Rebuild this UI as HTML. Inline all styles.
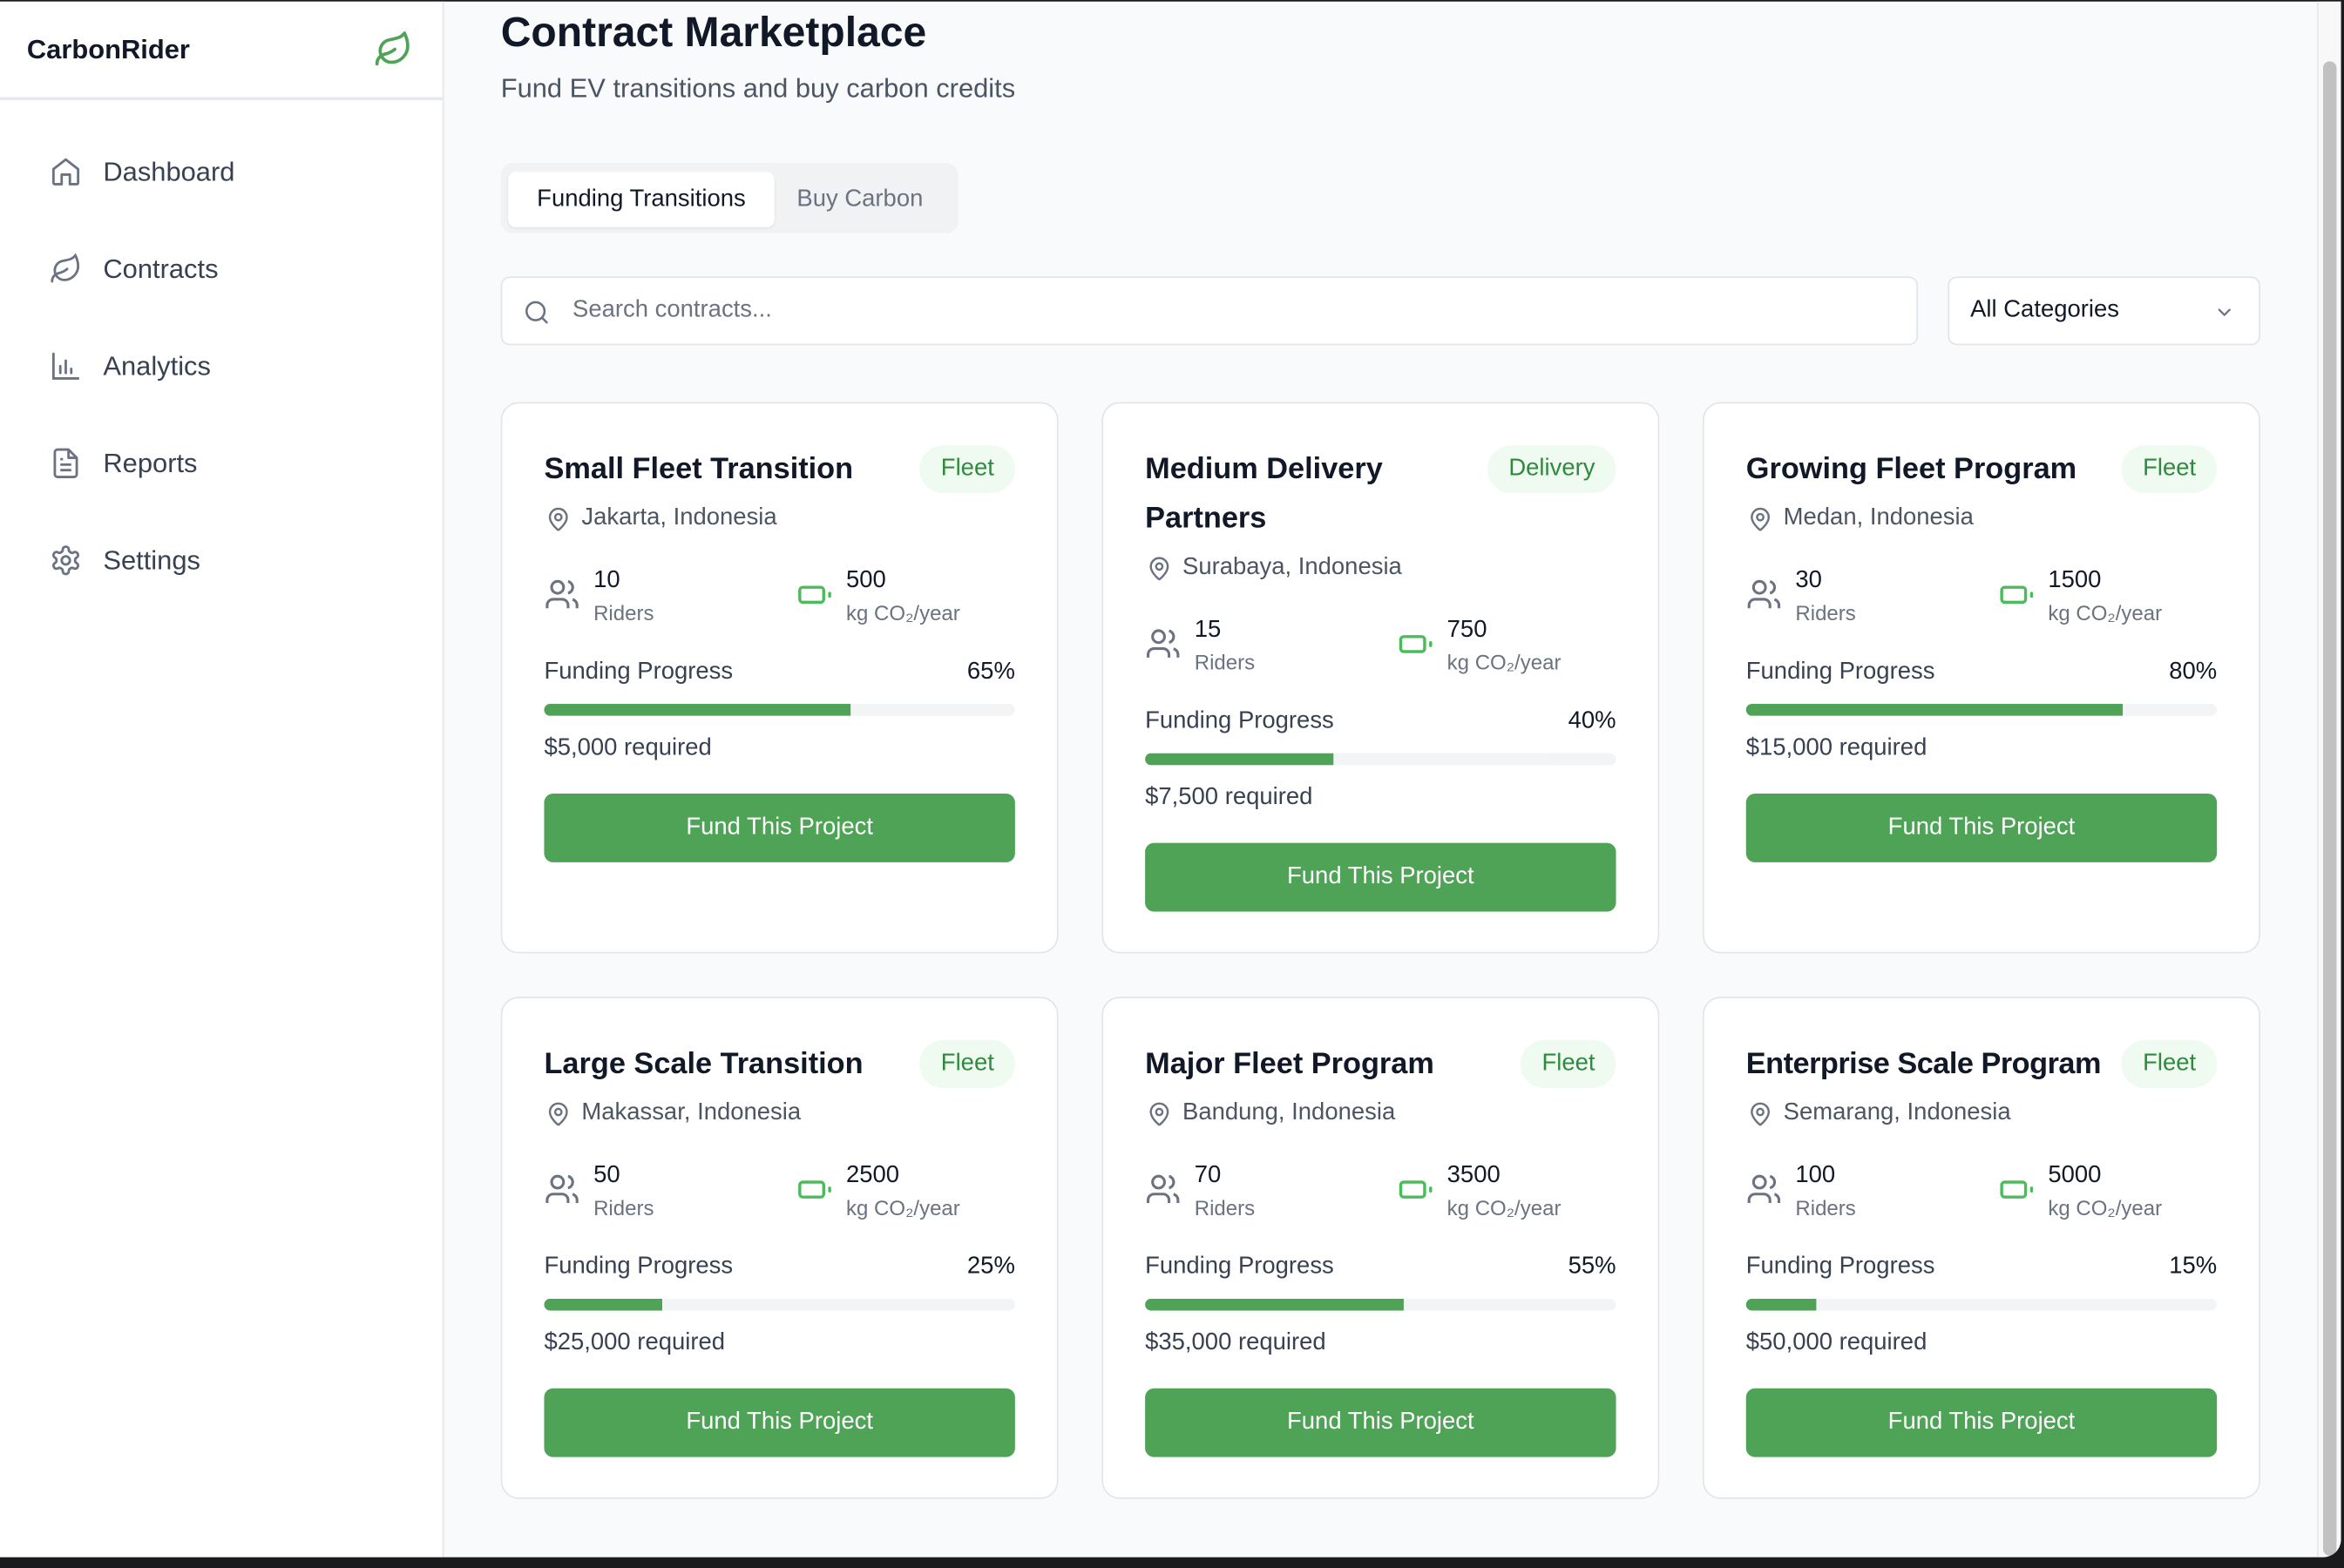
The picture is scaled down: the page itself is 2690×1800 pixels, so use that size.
<!DOCTYPE html>
<html><head><meta charset="utf-8">
<style>
*{box-sizing:border-box;margin:0;padding:0}
html,body{width:2690px;height:1800px;overflow:hidden;background:#1b1b1d;font-family:"Liberation Sans",sans-serif}
#s{width:1568px;height:1049px;transform:scale(1.71556);transform-origin:0 0;position:relative}
#win{position:absolute;left:0;top:1px;width:1566px;height:1041px;background:#f9fafb;border-bottom-right-radius:12px;overflow:hidden}
#side{position:absolute;left:0;top:0;width:297px;height:100%;background:#fff;border-right:1px solid #e5e7eb}
#logo{height:66px;border-bottom:2px solid #e5e7eb;display:flex;align-items:center;justify-content:space-between;padding:0 20px 0 18px;font-size:18px;font-weight:bold;color:#111827}
.nav{position:absolute;left:33px;display:flex;align-items:center;font-size:18px;color:#374151}
.nav svg{width:22px;height:22px;margin-right:14px}
#main{position:absolute;left:335px;top:0;width:1177px}
h1{position:absolute;top:5px;font-size:28px;font-weight:bold;color:#111827;white-space:nowrap}
.sub{position:absolute;top:48px;font-size:18px;color:#4b5563;white-space:nowrap}
#tabs{position:absolute;top:108px;left:0;width:306px;height:47px;background:#f1f2f4;border-radius:8px}
.tab{position:absolute;top:6px;height:37px;line-height:37px;font-size:16px}
#search{position:absolute;top:184px;left:0;width:948px;height:46px;background:#fff;border:1px solid #e2e4e8;border-radius:6px}
#sel{position:absolute;top:184px;left:968px;width:209px;height:46px;background:#fff;border:1px solid #e2e4e8;border-radius:6px;font-size:16px;color:#111827;line-height:44px;padding-left:14px}
#grid{position:absolute;top:268px;left:0;width:1177px;display:grid;grid-template-columns:373px 373px 373px;column-gap:29px;row-gap:29px}
.card{background:#fff;border:1px solid #e3e5e8;border-radius:12px;padding:28px 28px 27px 28px}
.hd{display:flex;justify-content:space-between;align-items:flex-start}
.tt{font-size:20px;font-weight:bold;color:#111827;line-height:33px}
.bd{background:#effaf1;color:#2f8a3d;font-size:16px;height:32px;line-height:32px;padding:0 14px;border-radius:16px;white-space:nowrap;flex-shrink:0}
.loc{display:flex;align-items:center;font-size:16px;color:#4b5563;line-height:24px;margin-top:4px}
.loc svg{margin:0 7px 0 1px}
.st{display:flex;margin-top:18px;height:43px}
.sc{display:flex;flex-shrink:0}
.sc:first-child{width:169px}
.sc svg{margin-top:9px;margin-right:9px}
.n{font-size:16px;color:#111827;line-height:24px}
.l{font-size:14px;color:#6b7280;line-height:19px}
.fp{display:flex;justify-content:space-between;margin-top:18px;font-size:16px;line-height:24px;color:#374151}
.fp b{font-weight:normal;color:#111827}
.bar{height:8px;background:#f3f4f6;border-radius:4px;margin-top:9px;overflow:hidden}
.bar i{display:block;height:100%;background:#4ea357}
.rq{margin-top:10px;font-size:16px;line-height:24px;color:#374151}
.btn{margin-top:18px;height:46px;background:#4ea357;border-radius:6px;color:#fff;font-size:16px;text-align:center;line-height:46px}
#sb{position:absolute;left:1550px;top:0;width:16px;height:100%;background:#f8f8f8;border-left:1px solid #e8e8e8}
#sb i{position:absolute;left:3px;top:40px;width:9px;height:1000px;border-radius:5px;background:#c1c1c1}
</style></head><body><div id="s"><div id="win">
<div id="side">
<div id="logo"><span>CarbonRider</span>
<svg width="26" height="26" viewBox="0 0 24 24" fill="none" stroke="#4ea357" stroke-width="2" stroke-linecap="round" stroke-linejoin="round"><path d="M11 20A7 7 0 0 1 9.8 6.1C15.5 5 17 4.5 19 2c1 2 2 4.2 2 8 0 5.5-4.8 10-10 10Z"/><path d="M2 21c0-3 1.9-5.4 5.2-6.1C9.5 14.4 12 13 13 12"/></svg></div>
<div class="nav" style="top:103px"><svg viewBox="0 0 24 24" fill="none" stroke="#6b7280" stroke-width="1.8" stroke-linejoin="round"><path d="M3 10l9-7 9 7v10a1 1 0 0 1-1 1h-5v-7H9v7H4a1 1 0 0 1-1-1z"/></svg>Dashboard</div>
<div class="nav" style="top:168px"><svg viewBox="0 0 24 24" fill="none" stroke="#6b7280" stroke-width="1.8" stroke-linecap="round"><path d="M11 20A7 7 0 0 1 9.8 6.1C15.5 5 17 4.5 19 2c1 2 2 4.2 2 8 0 5.5-4.8 10-10 10Z"/><path d="M2 21c0-3 1.9-5.4 5.2-6.1C9.5 14.4 12 13 13 12"/></svg>Contracts</div>
<div class="nav" style="top:233px"><svg viewBox="0 0 24 24" fill="none" stroke="#6b7280" stroke-width="1.8" stroke-linecap="round"><path d="M3 3v18h18M8 17v-5M12 17V8M16 17v-3"/></svg>Analytics</div>
<div class="nav" style="top:298px"><svg viewBox="0 0 24 24" fill="none" stroke="#6b7280" stroke-width="1.8" stroke-linejoin="round"><path d="M14 2H6a2 2 0 0 0-2 2v16a2 2 0 0 0 2 2h12a2 2 0 0 0 2-2V8z"/><path d="M14 2v6h6M8 13h8M8 17h8M8 9h2"/></svg>Reports</div>
<div class="nav" style="top:363px"><svg viewBox="0 0 24 24" fill="none" stroke="#6b7280" stroke-width="1.8"><circle cx="12" cy="12" r="3"/><path d="M12.2 2h-.4a2 2 0 0 0-2 2v.2a2 2 0 0 1-1 1.7l-.4.3a2 2 0 0 1-2 0l-.2-.1a2 2 0 0 0-2.7.7l-.2.4a2 2 0 0 0 .7 2.7l.2.1a2 2 0 0 1 1 1.7v.5a2 2 0 0 1-1 1.7l-.2.1a2 2 0 0 0-.7 2.7l.2.4a2 2 0 0 0 2.7.7l.2-.1a2 2 0 0 1 2 0l.4.3a2 2 0 0 1 1 1.7v.2a2 2 0 0 0 2 2h.4a2 2 0 0 0 2-2v-.2a2 2 0 0 1 1-1.7l.4-.3a2 2 0 0 1 2 0l.2.1a2 2 0 0 0 2.7-.7l.2-.4a2 2 0 0 0-.7-2.7l-.2-.1a2 2 0 0 1-1-1.7v-.5a2 2 0 0 1 1-1.7l.2-.1a2 2 0 0 0 .7-2.7l-.2-.4a2 2 0 0 0-2.7-.7l-.2.1a2 2 0 0 1-2 0l-.4-.3a2 2 0 0 1-1-1.7V4a2 2 0 0 0-2-2z"/></svg>Settings</div>
</div>
<div id="main">
<h1>Contract Marketplace</h1>
<div class="sub">Fund EV transitions and buy carbon credits</div>
<div id="tabs"><div class="tab" style="left:5px;width:178px;background:#fff;border-radius:5px;text-align:center;color:#111827;box-shadow:0 1px 2px rgba(0,0,0,.06)">Funding Transitions</div><div class="tab" style="left:198px;color:#6b7280">Buy Carbon</div></div>
<div id="search"><svg style="position:absolute;left:14px;top:14px" width="18" height="18" viewBox="0 0 24 24" fill="none" stroke="#6b7280" stroke-width="2" stroke-linecap="round"><circle cx="11" cy="11" r="8"/><path d="M21 21l-4.3-4.3"/></svg><span style="position:absolute;left:47px;top:0;line-height:44px;font-size:16px;color:#6b7280">Search contracts...</span></div>
<div id="sel">All Categories<svg style="position:absolute;right:16px;top:16px" width="14" height="14" viewBox="0 0 24 24" fill="none" stroke="#6b7280" stroke-width="2.2" stroke-linecap="round"><path d="M6 9l6 6 6-6"/></svg></div>
<div id="grid">
<div class="card"><div class="hd"><div class="tt">Small Fleet Transition</div><div class="bd">Fleet</div></div>
<div class="loc"><svg width="17" height="17" viewBox="0 0 24 24" fill="none" stroke="#6b7280" stroke-width="2"><path d="M20 10c0 5-5.5 10.2-7.4 11.8a1 1 0 0 1-1.2 0C9.5 20.2 4 15 4 10a8 8 0 0 1 16 0"/><circle cx="12" cy="10" r="3"/></svg>Jakarta, Indonesia</div>
<div class="st"><div class="sc"><svg width="24" height="24" viewBox="0 0 24 24" fill="none" stroke="#6b7280" stroke-width="1.8"><circle cx="9" cy="7" r="4"/><path d="M2 21v-2a4 4 0 0 1 4-4h6a4 4 0 0 1 4 4v2M16 3.1a4 4 0 0 1 0 7.8M22 21v-2a4 4 0 0 0-3-3.9"/></svg><div><div class="n">10</div><div class="l">Riders</div></div></div>
<div class="sc"><svg width="24" height="24" viewBox="0 0 24 24" fill="none" stroke="#4cbb5c" stroke-width="2" stroke-linecap="round"><rect x="2" y="7" width="16" height="10" rx="2"/><path d="M22 11v2"/></svg><div><div class="n">500</div><div class="l">kg CO₂/year</div></div></div></div>
<div class="fp"><span>Funding Progress</span><b>65%</b></div><div class="bar"><i style="width:65%"></i></div>
<div class="rq">$5,000 required</div><div class="btn">Fund This Project</div></div>

<div class="card"><div class="hd"><div class="tt">Medium Delivery<br>Partners</div><div class="bd">Delivery</div></div>
<div class="loc"><svg width="17" height="17" viewBox="0 0 24 24" fill="none" stroke="#6b7280" stroke-width="2"><path d="M20 10c0 5-5.5 10.2-7.4 11.8a1 1 0 0 1-1.2 0C9.5 20.2 4 15 4 10a8 8 0 0 1 16 0"/><circle cx="12" cy="10" r="3"/></svg>Surabaya, Indonesia</div>
<div class="st"><div class="sc"><svg width="24" height="24" viewBox="0 0 24 24" fill="none" stroke="#6b7280" stroke-width="1.8"><circle cx="9" cy="7" r="4"/><path d="M2 21v-2a4 4 0 0 1 4-4h6a4 4 0 0 1 4 4v2M16 3.1a4 4 0 0 1 0 7.8M22 21v-2a4 4 0 0 0-3-3.9"/></svg><div><div class="n">15</div><div class="l">Riders</div></div></div>
<div class="sc"><svg width="24" height="24" viewBox="0 0 24 24" fill="none" stroke="#4cbb5c" stroke-width="2" stroke-linecap="round"><rect x="2" y="7" width="16" height="10" rx="2"/><path d="M22 11v2"/></svg><div><div class="n">750</div><div class="l">kg CO₂/year</div></div></div></div>
<div class="fp"><span>Funding Progress</span><b>40%</b></div><div class="bar"><i style="width:40%"></i></div>
<div class="rq">$7,500 required</div><div class="btn">Fund This Project</div></div>

<div class="card"><div class="hd"><div class="tt">Growing Fleet Program</div><div class="bd">Fleet</div></div>
<div class="loc"><svg width="17" height="17" viewBox="0 0 24 24" fill="none" stroke="#6b7280" stroke-width="2"><path d="M20 10c0 5-5.5 10.2-7.4 11.8a1 1 0 0 1-1.2 0C9.5 20.2 4 15 4 10a8 8 0 0 1 16 0"/><circle cx="12" cy="10" r="3"/></svg>Medan, Indonesia</div>
<div class="st"><div class="sc"><svg width="24" height="24" viewBox="0 0 24 24" fill="none" stroke="#6b7280" stroke-width="1.8"><circle cx="9" cy="7" r="4"/><path d="M2 21v-2a4 4 0 0 1 4-4h6a4 4 0 0 1 4 4v2M16 3.1a4 4 0 0 1 0 7.8M22 21v-2a4 4 0 0 0-3-3.9"/></svg><div><div class="n">30</div><div class="l">Riders</div></div></div>
<div class="sc"><svg width="24" height="24" viewBox="0 0 24 24" fill="none" stroke="#4cbb5c" stroke-width="2" stroke-linecap="round"><rect x="2" y="7" width="16" height="10" rx="2"/><path d="M22 11v2"/></svg><div><div class="n">1500</div><div class="l">kg CO₂/year</div></div></div></div>
<div class="fp"><span>Funding Progress</span><b>80%</b></div><div class="bar"><i style="width:80%"></i></div>
<div class="rq">$15,000 required</div><div class="btn">Fund This Project</div></div>

<div class="card"><div class="hd"><div class="tt">Large Scale Transition</div><div class="bd">Fleet</div></div>
<div class="loc"><svg width="17" height="17" viewBox="0 0 24 24" fill="none" stroke="#6b7280" stroke-width="2"><path d="M20 10c0 5-5.5 10.2-7.4 11.8a1 1 0 0 1-1.2 0C9.5 20.2 4 15 4 10a8 8 0 0 1 16 0"/><circle cx="12" cy="10" r="3"/></svg>Makassar, Indonesia</div>
<div class="st"><div class="sc"><svg width="24" height="24" viewBox="0 0 24 24" fill="none" stroke="#6b7280" stroke-width="1.8"><circle cx="9" cy="7" r="4"/><path d="M2 21v-2a4 4 0 0 1 4-4h6a4 4 0 0 1 4 4v2M16 3.1a4 4 0 0 1 0 7.8M22 21v-2a4 4 0 0 0-3-3.9"/></svg><div><div class="n">50</div><div class="l">Riders</div></div></div>
<div class="sc"><svg width="24" height="24" viewBox="0 0 24 24" fill="none" stroke="#4cbb5c" stroke-width="2" stroke-linecap="round"><rect x="2" y="7" width="16" height="10" rx="2"/><path d="M22 11v2"/></svg><div><div class="n">2500</div><div class="l">kg CO₂/year</div></div></div></div>
<div class="fp"><span>Funding Progress</span><b>25%</b></div><div class="bar"><i style="width:25%"></i></div>
<div class="rq">$25,000 required</div><div class="btn">Fund This Project</div></div>

<div class="card"><div class="hd"><div class="tt">Major Fleet Program</div><div class="bd">Fleet</div></div>
<div class="loc"><svg width="17" height="17" viewBox="0 0 24 24" fill="none" stroke="#6b7280" stroke-width="2"><path d="M20 10c0 5-5.5 10.2-7.4 11.8a1 1 0 0 1-1.2 0C9.5 20.2 4 15 4 10a8 8 0 0 1 16 0"/><circle cx="12" cy="10" r="3"/></svg>Bandung, Indonesia</div>
<div class="st"><div class="sc"><svg width="24" height="24" viewBox="0 0 24 24" fill="none" stroke="#6b7280" stroke-width="1.8"><circle cx="9" cy="7" r="4"/><path d="M2 21v-2a4 4 0 0 1 4-4h6a4 4 0 0 1 4 4v2M16 3.1a4 4 0 0 1 0 7.8M22 21v-2a4 4 0 0 0-3-3.9"/></svg><div><div class="n">70</div><div class="l">Riders</div></div></div>
<div class="sc"><svg width="24" height="24" viewBox="0 0 24 24" fill="none" stroke="#4cbb5c" stroke-width="2" stroke-linecap="round"><rect x="2" y="7" width="16" height="10" rx="2"/><path d="M22 11v2"/></svg><div><div class="n">3500</div><div class="l">kg CO₂/year</div></div></div></div>
<div class="fp"><span>Funding Progress</span><b>55%</b></div><div class="bar"><i style="width:55%"></i></div>
<div class="rq">$35,000 required</div><div class="btn">Fund This Project</div></div>

<div class="card"><div class="hd"><div class="tt" style="white-space:nowrap;letter-spacing:-0.3px">Enterprise Scale Program</div><div class="bd">Fleet</div></div>
<div class="loc"><svg width="17" height="17" viewBox="0 0 24 24" fill="none" stroke="#6b7280" stroke-width="2"><path d="M20 10c0 5-5.5 10.2-7.4 11.8a1 1 0 0 1-1.2 0C9.5 20.2 4 15 4 10a8 8 0 0 1 16 0"/><circle cx="12" cy="10" r="3"/></svg>Semarang, Indonesia</div>
<div class="st"><div class="sc"><svg width="24" height="24" viewBox="0 0 24 24" fill="none" stroke="#6b7280" stroke-width="1.8"><circle cx="9" cy="7" r="4"/><path d="M2 21v-2a4 4 0 0 1 4-4h6a4 4 0 0 1 4 4v2M16 3.1a4 4 0 0 1 0 7.8M22 21v-2a4 4 0 0 0-3-3.9"/></svg><div><div class="n">100</div><div class="l">Riders</div></div></div>
<div class="sc"><svg width="24" height="24" viewBox="0 0 24 24" fill="none" stroke="#4cbb5c" stroke-width="2" stroke-linecap="round"><rect x="2" y="7" width="16" height="10" rx="2"/><path d="M22 11v2"/></svg><div><div class="n">5000</div><div class="l">kg CO₂/year</div></div></div></div>
<div class="fp"><span>Funding Progress</span><b>15%</b></div><div class="bar"><i style="width:15%"></i></div>
<div class="rq">$50,000 required</div><div class="btn">Fund This Project</div></div>
</div></div>
<div id="sb"><i></i></div>
</div></div></body></html>
